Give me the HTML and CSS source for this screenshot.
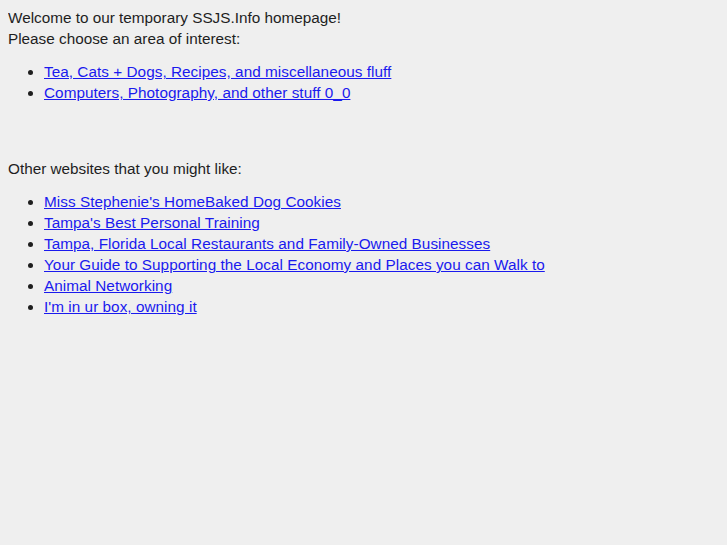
FILE: index.html
```html
<!doctype html>
<html>
<head>
<meta charset="utf-8">
<title>SSJS.Info</title>
<link rel="stylesheet" href="styles.css">
</head>

<body>

<div class="intro">
	Welcome to our temporary SSJS.Info homepage!<br>
	Please choose an area of interest:
</div>
<ul class="first">
	<li><a href="#">Tea, Cats + Dogs, Recipes, and miscellaneous fluff</a></li>
	<li><a href="#">Computers, Photography, and other stuff 0_0</a></li>
</ul>
<br><br>
<div class="intro">Other websites that you might like:</div>
<ul class="second">
	<li><a href="#">Miss Stephenie's HomeBaked Dog Cookies </a></li>
	<li><a href="#">Tampa's Best Personal Training</a></li>
	<li><a href="#">Tampa, Florida Local Restaurants and Family-Owned Businesses </a></li>
	<li><a href="#">Your Guide to Supporting the Local Economy and Places you can Walk to</a></li>
	<li><a href="#">Animal Networking</a></li>
	<li><a href="#">I'm in ur box, owning it</a></li>
</ul>

</body>
</html>
```
FILE: styles.css
```css
html { background: #efefef; }

body {
	margin: 7px 8px;
	font-family: "Liberation Sans", Arial, sans-serif;
	font-size: 15.3px;
	line-height: 21px;
	color: #1e1e1e;
}

ul {
	padding-left: 36px;
}
ul.first { margin: 12px 0 13px; }
ul.second { margin: 12px 0; }

a {
	color: #1a1aee;
	letter-spacing: 0.04px;
}
```
